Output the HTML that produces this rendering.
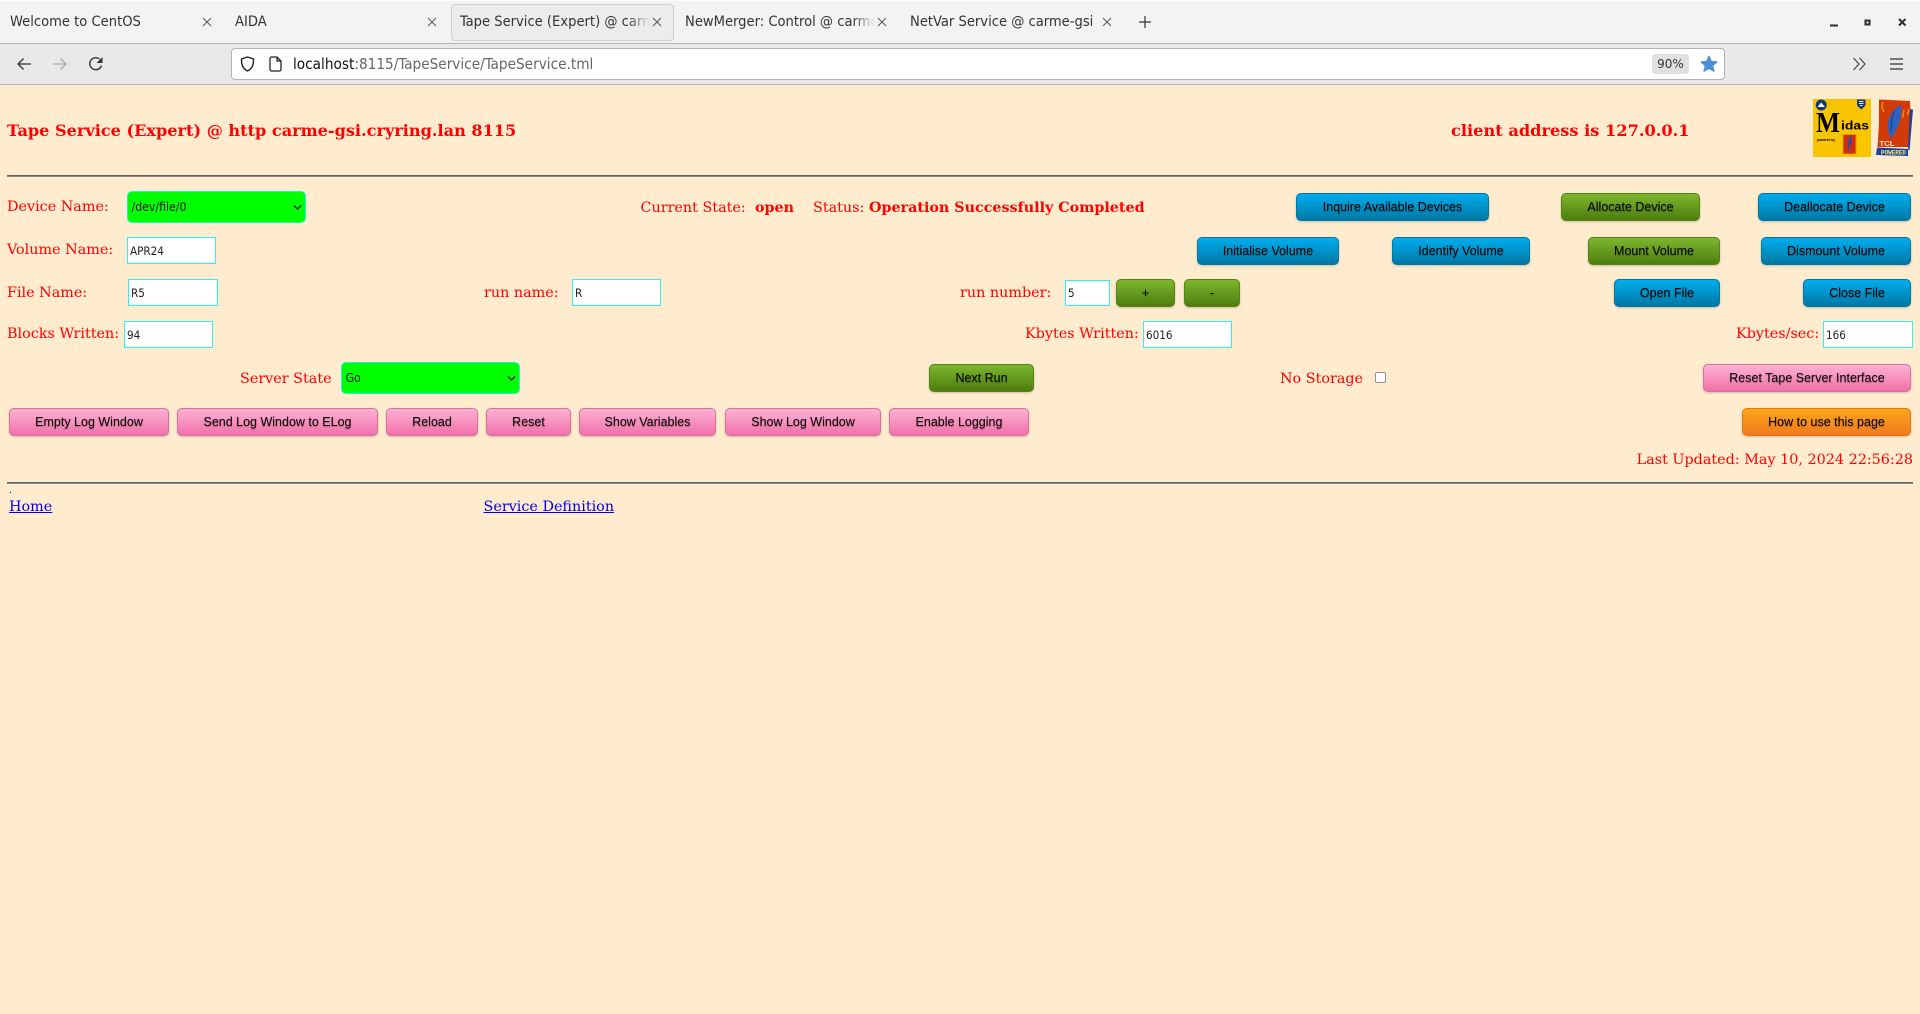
<!DOCTYPE html>
<html lang="en">
<head>
<meta charset="utf-8">
<title>Tape Service (Expert)</title>
<style>
html,body{margin:0;padding:0;width:1920px;height:1014px;overflow:hidden;background:#ffebcd}
*{box-sizing:border-box}
.a{position:absolute;white-space:nowrap}
#tabs{position:absolute;left:0;top:0;width:1920px;height:44px;background:#f3f3f3;border-bottom:1px solid #b4b4b4;border-top:1px solid #fbfbfb}
#nav{position:absolute;left:0;top:44px;width:1920px;height:41px;background:#e9e9e9;border-bottom:1px solid #b8b8b8}
#url{position:absolute;left:231px;top:48px;width:1494px;height:32px;background:#fff;border:1px solid #b4b4b4;border-radius:4px}
#atab{position:absolute;left:451px;top:4px;width:223px;height:37px;background:#ececec;border:1px solid #cfcfcf;border-radius:4px}
.t{position:absolute;top:11px;height:22px;font:14.6px/22px "DejaVu Sans",sans-serif;font-stretch:condensed;color:#333;white-space:nowrap;overflow:hidden}
.x{position:absolute;top:15px}
.l,.lb{position:absolute;font-family:"DejaVu Serif",serif;font-size:14.35px;line-height:20px;height:20px;color:#f00;white-space:nowrap}
.lb{font-weight:bold;font-size:14.3px}
.i{position:absolute;height:27px;background:#fff;border:1px solid #33eeee;font:11.6px/26px "DejaVu Sans",sans-serif;font-stretch:condensed;color:#222;padding-left:2px;white-space:nowrap}
.s{position:absolute;height:32px;background:#0f0;border:1px solid #22eedd;border-radius:5px;font:12.2px/30px "DejaVu Sans",sans-serif;font-stretch:condensed;color:#111;padding-left:3.5px}
.s svg{position:absolute;right:3px;top:12px}
.b{position:absolute;height:28px;border-radius:5px;font:12.5px/26px "Liberation Sans",sans-serif;color:#000;text-align:center;white-space:nowrap;text-shadow:0 1px 1px rgba(0,0,0,.3);box-shadow:0 1px 2px rgba(0,0,0,.2)}
.bl{border:1px solid #0076a3;background:linear-gradient(#00adee,#0078a5)}
.gr{border:1px solid #538312;background:linear-gradient(#7db72f,#4e7d0e)}
.pk{border:1px solid #d2729e;background:linear-gradient(#feb1d3,#f171ab)}
.or{border:1px solid #da7c0c;background:linear-gradient(#faa51a,#f47a20)}
.hr{position:absolute;left:7px;width:1906px;height:2px;background:#666;border-bottom:1px solid #8a8a80}
a{color:#00e}
</style>
</head>
<body>
<div id="tabs"></div>
<div id="atab"></div>
<div class="t" style="left:10px;width:180px">Welcome to CentOS</div>
<div class="t" style="left:235px;width:180px">AIDA</div>
<div class="t" style="left:460px;width:190px;-webkit-mask-image:linear-gradient(90deg,#000 88%,transparent)">Tape Service (Expert) @ carme-gsi</div>
<div class="t" style="left:685px;width:190px;-webkit-mask-image:linear-gradient(90deg,#000 88%,transparent)">NewMerger: Control @ carme-gsi</div>
<div class="t" style="left:910px;width:187px">NetVar Service @ carme-gsi</div>
<svg class="x" style="left:202px" width="10" height="14" viewBox="0 0 10 14"><path d="M1 3l8 8M9 3l-8 8" stroke="#555" fill="none"/></svg>
<svg class="x" style="left:427px" width="10" height="14" viewBox="0 0 10 14"><path d="M1 3l8 8M9 3l-8 8" stroke="#555" fill="none"/></svg>
<svg class="x" style="left:652px" width="10" height="14" viewBox="0 0 10 14"><path d="M1 3l8 8M9 3l-8 8" stroke="#555" fill="none"/></svg>
<svg class="x" style="left:877px" width="10" height="14" viewBox="0 0 10 14"><path d="M1 3l8 8M9 3l-8 8" stroke="#555" fill="none"/></svg>
<svg class="x" style="left:1102px" width="10" height="14" viewBox="0 0 10 14"><path d="M1 3l8 8M9 3l-8 8" stroke="#555" fill="none"/></svg>
<svg class="a" style="left:1138px;top:15px" width="14" height="14" viewBox="0 0 14 14"><path d="M7 1v12M1 7h12" stroke="#333" stroke-width="1.2" fill="none"/></svg>
<svg class="a" style="left:1828px;top:18px" width="84" height="12" viewBox="0 0 84 12"><path d="M2 7.5h8" stroke="#2e2e2e" stroke-width="2" fill="none"/><rect x="37.5" y="2.5" width="4" height="4" fill="none" stroke="#2e2e2e" stroke-width="2"/><path d="M71 1l6.5 6.5M77.500 1l-6.500 6.500" stroke="#2e2e2e" stroke-width="2" fill="none"/></svg>

<div id="nav"></div>
<svg class="a" style="left:16px;top:57px" width="16" height="14" viewBox="0 0 16 14"><path d="M15 7H2M7.500 1.500L2 7l5.500 5.500" stroke="#333" stroke-width="1.300" fill="none"/></svg>
<svg class="a" style="left:52px;top:57px" width="16" height="14" viewBox="0 0 16 14"><path d="M1 7h13M8.500 1.500L14 7l-5.500 5.500" stroke="#aaa" stroke-width="1.300" fill="none"/></svg>
<svg class="a" style="left:88px;top:56px" width="16" height="16" viewBox="0 0 16 16"><path d="M13.500 9.500A6 6 0 1 1 11.500 3" stroke="#333" stroke-width="1.400" fill="none"/><path d="M14.500 1v6h-6z" fill="#333"/></svg>
<div id="url"></div>
<svg class="a" style="left:239.500px;top:56px" width="15" height="16" viewBox="0 0 15 16"><path d="M7.500 1L13.500 3c.3 6-2 10-6 12-4-2-6.300-6-6-12z" stroke="#222" stroke-width="1.400" fill="none"/></svg>
<svg class="a" style="left:268.500px;top:56px" width="13" height="16" viewBox="0 0 13 16"><path d="M2.700 1H8l4 4v8.300a1.700 1.700 0 0 1-1.700 1.700H2.700A1.700 1.700 0 0 1 1 13.300V2.700A1.700 1.700 0 0 1 2.700 1zM8 1v4h4" stroke="#222" stroke-width="1.300" fill="none"/></svg>
<div class="a" style="left:293px;top:53px;font:15.2px/22px 'DejaVu Sans',sans-serif;font-stretch:condensed;color:#666"><span style="color:#111">localhost</span>:8115/TapeService/TapeService.tml</div>
<div class="a" style="left:1652px;top:54px;width:37px;height:20px;background:#e0e0e0;border-radius:3px;font:12px/20px 'DejaVu Sans',sans-serif;color:#333;text-align:center">90%</div>
<svg class="a" style="left:1700px;top:55px" width="18" height="18" viewBox="0 0 18 18"><path d="M9 1l2.400 5.300 5.700.6-4.300 3.800 1.300 5.700L9 13.500l-5.100 2.900 1.300-5.700L.9 6.900l5.700-.6z" fill="#4a90d9" stroke="#4a90d9" stroke-linejoin="round"/></svg>
<svg class="a" style="left:1852px;top:57px" width="15" height="14" viewBox="0 0 15 14"><path d="M1.500 1l5.500 6-5.500 6M7.500 1l5.500 6-5.500 6" stroke="#444" stroke-width="1.200" fill="none"/></svg>
<svg class="a" style="left:1889.500px;top:58px" width="13" height="12" viewBox="0 0 13 12"><path d="M0 1h13M0 6h13M0 11h13" stroke="#333" stroke-width="1.200" fill="none"/></svg>

<div class="lb" style="left:7px;top:121px;font-size:16.13px">Tape Service (Expert) @ http carme-gsi.cryring.lan 8115</div>
<div class="lb" style="left:1451px;top:121px;font-size:16.2px">client address is 127.0.0.1</div>

<svg class="a" style="left:1813px;top:99px" width="58" height="58" viewBox="0 0 58 58">
<rect width="58" height="58" fill="#f9c400"/>
<circle cx="8.200" cy="6" r="5.500" fill="#123a70"/><path d="M4.500 8l3.700-4.500 3.700 4.500z" fill="#fff"/>
<path d="M44 .5h8.500v6l-4.200 4-4.300-4z" fill="#1c3a7a"/><path d="M46 2.500h4.500M46 4.500h4.500M47 6.500h2.500" stroke="#e8e8e8" stroke-width="1" fill="none"/>
<text x="3" y="33" font-family="Liberation Serif,serif" font-weight="bold" font-size="29" fill="#000" textLength="24" lengthAdjust="spacingAndGlyphs">M</text>
<text x="28" y="30.500" font-family="Liberation Sans,sans-serif" font-weight="bold" font-size="11.500" fill="#000" textLength="28" lengthAdjust="spacingAndGlyphs">idas</text>
<text x="4" y="42" font-family="Liberation Sans,sans-serif" font-weight="bold" font-size="3.500" fill="#000" textLength="18" lengthAdjust="spacingAndGlyphs">powered by</text>
<rect x="30" y="35.500" width="13" height="19.500" fill="#d22a10" stroke="#e0a000"/><path d="M37.500 38c-2 4-2 9-1.500 13M37.500 38c1 3 1 5-1.500 8" stroke="#2252a8" stroke-width="1.500" fill="none"/>
</svg>
<svg class="a" style="left:1876px;top:99px" width="37" height="58" viewBox="0 0 37 58">
<path d="M3 .5l31 1.500.5 8L34 48 1.500 48 3 25z" fill="#d23b08"/>
<path d="M1 48.500l31 1.500v7L0 56z" fill="#1a3fa5"/><path d="M34 10l3 .5-3.500 41-1.500-1z" fill="#1a3fa5"/>
<path d="M25 6c-7 3-13 11-13 20 0 5 1 10 3 14 2-4 3.500-5 6-11 3-6 5-14 4-23z" fill="#2c62c0"/>
<path d="M18 12c-2 6-3 12-3 20" stroke="#1a3a80" fill="none"/>
<path d="M7 3c-1.500 3-1.500 6 1 10M28 11l-1.500 8M33 10l-1.500 6" stroke="#f0a010" stroke-width="1.200" fill="none"/>
<text x="3.500" y="47" font-family="Liberation Sans,sans-serif" font-weight="bold" font-size="7.500" fill="#f2e6d0" textLength="15" lengthAdjust="spacingAndGlyphs">TCL</text>
<text x="5" y="55.500" font-family="Liberation Mono,monospace" font-weight="bold" font-size="6" fill="#f5ef50" textLength="25" lengthAdjust="spacingAndGlyphs">POWERED</text>
</svg>

<div class="hr" style="top:175px"></div>

<div class="l" style="left:7px;top:197px">Device Name:</div>
<div class="s" style="left:127px;top:191px;width:179px">/dev/file/0<svg width="9" height="7" viewBox="0 0 9 7"><path d="M1 1.500l3.500 3.500L8 1.500" stroke="#222" stroke-width="1.400" fill="none"/></svg></div>
<div class="l" style="left:640.500px;top:198px">Current State:</div>
<div class="lb" style="left:755px;top:198px">open</div>
<div class="l" style="left:813px;top:198px">Status:</div>
<div class="lb" style="left:869px;top:198px">Operation Successfully Completed</div>
<div class="b bl" style="left:1296px;top:193px;width:193px">Inquire Available Devices</div>
<div class="b gr" style="left:1561px;top:193px;width:139px">Allocate Device</div>
<div class="b bl" style="left:1758px;top:193px;width:153px">Deallocate Device</div>

<div class="l" style="left:7px;top:240px">Volume Name:</div>
<div class="i" style="left:127px;top:237px;width:89px">APR24</div>
<div class="b bl" style="left:1197px;top:237px;width:142px">Initialise Volume</div>
<div class="b bl" style="left:1392px;top:237px;width:138px">Identify Volume</div>
<div class="b gr" style="left:1588px;top:237px;width:132px">Mount Volume</div>
<div class="b bl" style="left:1761px;top:237px;width:150px">Dismount Volume</div>

<div class="l" style="left:7px;top:283px">File Name:</div>
<div class="i" style="left:128px;top:279px;width:90px">R5</div>
<div class="l" style="left:484px;top:283px">run name:</div>
<div class="i" style="left:572px;top:279px;width:89px">R</div>
<div class="l" style="left:960px;top:283px">run number:</div>
<div class="i" style="left:1065px;top:280px;width:45px;height:26px;line-height:25px">5</div>
<div class="b gr" style="left:1116px;top:279px;width:59px">+</div>
<div class="b gr" style="left:1184px;top:279px;width:56px">-</div>
<div class="b bl" style="left:1614px;top:279px;width:106px">Open File</div>
<div class="b bl" style="left:1803px;top:279px;width:108px">Close File</div>

<div class="l" style="left:7px;top:323.500px">Blocks Written:</div>
<div class="i" style="left:124px;top:321px;width:89px">94</div>
<div class="l" style="left:1025px;top:323.500px">Kbytes Written:</div>
<div class="i" style="left:1143px;top:321px;width:89px">6016</div>
<div class="l" style="left:1736px;top:323.500px">Kbytes/sec:</div>
<div class="i" style="left:1823px;top:321px;width:90px">166</div>

<div class="l" style="left:240px;top:368.500px">Server State</div>
<div class="s" style="left:341px;top:362px;width:179px">Go<svg width="9" height="7" viewBox="0 0 9 7"><path d="M1 1.500l3.500 3.500L8 1.500" stroke="#222" stroke-width="1.400" fill="none"/></svg></div>
<div class="b gr" style="left:929px;top:364px;width:105px">Next Run</div>
<div class="l" style="left:1280px;top:368.500px">No Storage</div>
<div class="a" style="left:1375px;top:372px;width:11px;height:11px;background:#fff;border:1px solid #8f8f9d;border-radius:2px"></div>
<div class="b pk" style="left:1703px;top:364px;width:208px">Reset Tape Server Interface</div>

<div class="b pk" style="left:9px;top:408px;width:160px">Empty Log Window</div>
<div class="b pk" style="left:177px;top:408px;width:201px">Send Log Window to ELog</div>
<div class="b pk" style="left:386px;top:408px;width:92px">Reload</div>
<div class="b pk" style="left:486px;top:408px;width:85px">Reset</div>
<div class="b pk" style="left:579px;top:408px;width:137px">Show Variables</div>
<div class="b pk" style="left:725px;top:408px;width:156px">Show Log Window</div>
<div class="b pk" style="left:889px;top:408px;width:140px">Enable Logging</div>
<div class="b or" style="left:1742px;top:408px;width:169px">How to use this page</div>

<div class="l" style="right:7px;top:449.500px">Last Updated: May 10, 2024 22:56:28</div>
<div class="hr" style="top:482px"></div>
<div class="a" style="left:9px;top:486px;font:9px/10px 'DejaVu Serif',serif;color:#000">.</div>
<div class="l" style="left:9px;top:497px;color:#00e"><a href="#">Home</a></div>
<div class="l" style="left:483.500px;top:497px;color:#00e"><a href="#">Service Definition</a></div>
</body>
</html>
